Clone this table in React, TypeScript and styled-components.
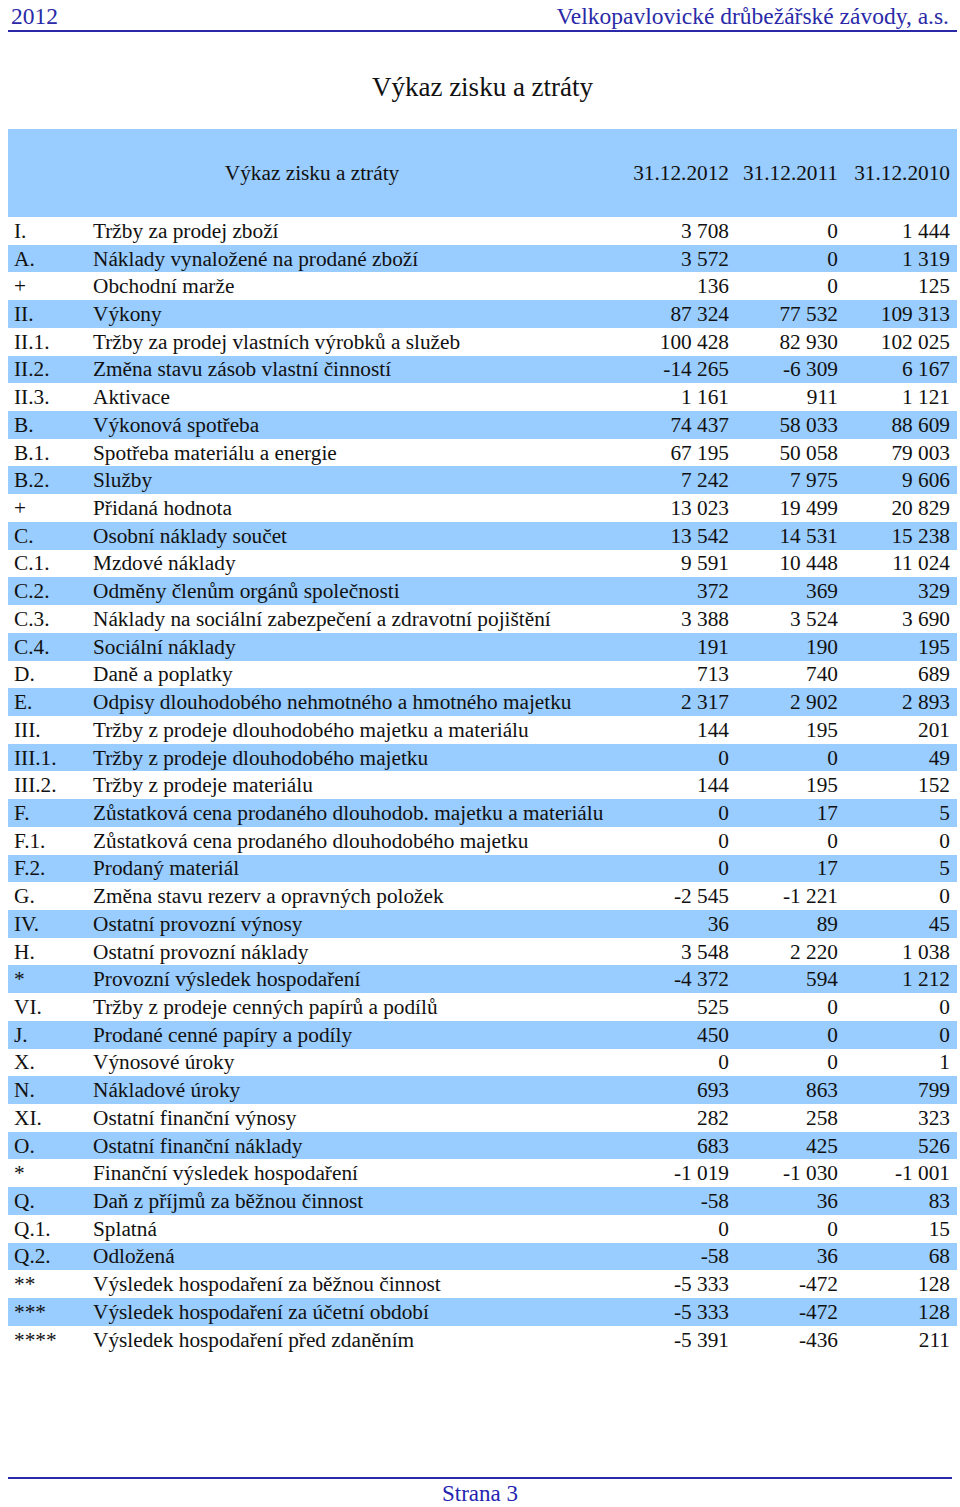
import styled, { createGlobalStyle } from 'styled-components';

const GlobalStyle = createGlobalStyle`
  html, body {
    margin: 0;
    padding: 0;
    background: #ffffff;
  }
  body {
    font-family: "Liberation Serif", "Times New Roman", serif;
    color: #111;
  }
`;

const Page = styled.div`
  width: 960px;
  min-height: 1507px;
  box-sizing: border-box;
  padding: 0 3px 0 8px;
  display: flex;
  flex-direction: column;
`;

const TopBar = styled.header`
  display: flex;
  justify-content: space-between;
  align-items: flex-end;
  height: 30px;
  padding: 0 8px 0 3px;
  border-bottom: 2px solid #2a2aa8;
  color: #2a2aa8;
  font-size: 23.5px;
  line-height: 28px;
`;

const Title = styled.h1`
  margin: 40px 0 0;
  height: 57px;
  text-align: center;
  font-weight: normal;
  font-size: 27px;
  line-height: 30px;
  color: #111;
`;

const Table = styled.table`
  width: 949px;
  border-collapse: collapse;
  table-layout: fixed;
  font-size: 21.3px;
`;

const HeadRow = styled.tr`
  height: 88px;
  background: #99ccff;
`;

const HeadCell = styled.th<{ $align?: 'center' | 'right' }>`
  font-weight: normal;
  text-align: ${(p) => p.$align ?? 'right'};
  padding: 0 7px 0 0;
  vertical-align: middle;
`;

const Row = styled.tr<{ $shaded: boolean }>`
  height: 27.72px;
  background: ${(p) => (p.$shaded ? '#99ccff' : 'transparent')};
`;

const CodeCell = styled.td`
  padding: 1px 0 0 6px;
  white-space: nowrap;
`;

const LabelCell = styled.td`
  padding: 1px 0 0;
  white-space: nowrap;
`;

const NumCell = styled.td`
  padding: 1px 7px 0 0;
  text-align: right;
  white-space: nowrap;
`;

const Spacer = styled.div`
  flex: 1;
`;

const Footer = styled.footer`
  border-top: 2px solid #2a2aa8;
  margin: 0 5px 0 0;
  padding: 2px 0 0;
  height: 26px;
  text-align: center;
  color: #2424b0;
  font-size: 23px;
  line-height: 26px;
`;

type Line = [string, string, string, string, string];

const rows: Line[] = [
  ['I.', 'Tržby za prodej zboží', '3 708', '0', '1 444'],
  ['A.', 'Náklady vynaložené na prodané zboží', '3 572', '0', '1 319'],
  ['+', 'Obchodní marže', '136', '0', '125'],
  ['II.', 'Výkony', '87 324', '77 532', '109 313'],
  ['II.1.', 'Tržby za prodej vlastních výrobků a služeb', '100 428', '82 930', '102 025'],
  ['II.2.', 'Změna stavu zásob vlastní činností', '-14 265', '-6 309', '6 167'],
  ['II.3.', 'Aktivace', '1 161', '911', '1 121'],
  ['B.', 'Výkonová spotřeba', '74 437', '58 033', '88 609'],
  ['B.1.', 'Spotřeba materiálu a energie', '67 195', '50 058', '79 003'],
  ['B.2.', 'Služby', '7 242', '7 975', '9 606'],
  ['+', 'Přidaná hodnota', '13 023', '19 499', '20 829'],
  ['C.', 'Osobní náklady součet', '13 542', '14 531', '15 238'],
  ['C.1.', 'Mzdové náklady', '9 591', '10 448', '11 024'],
  ['C.2.', 'Odměny členům orgánů společnosti', '372', '369', '329'],
  ['C.3.', 'Náklady na sociální zabezpečení a zdravotní pojištění', '3 388', '3 524', '3 690'],
  ['C.4.', 'Sociální náklady', '191', '190', '195'],
  ['D.', 'Daně a poplatky', '713', '740', '689'],
  ['E.', 'Odpisy dlouhodobého nehmotného a hmotného majetku', '2 317', '2 902', '2 893'],
  ['III.', 'Tržby z prodeje dlouhodobého majetku a materiálu', '144', '195', '201'],
  ['III.1.', 'Tržby z prodeje dlouhodobého majetku', '0', '0', '49'],
  ['III.2.', 'Tržby z prodeje materiálu', '144', '195', '152'],
  ['F.', 'Zůstatková cena prodaného dlouhodob. majetku a materiálu', '0', '17', '5'],
  ['F.1.', 'Zůstatková cena prodaného dlouhodobého majetku', '0', '0', '0'],
  ['F.2.', 'Prodaný materiál', '0', '17', '5'],
  ['G.', 'Změna stavu rezerv a opravných položek', '-2 545', '-1 221', '0'],
  ['IV.', 'Ostatní provozní výnosy', '36', '89', '45'],
  ['H.', 'Ostatní provozní náklady', '3 548', '2 220', '1 038'],
  ['*', 'Provozní výsledek hospodaření', '-4 372', '594', '1 212'],
  ['VI.', 'Tržby z prodeje cenných papírů a podílů', '525', '0', '0'],
  ['J.', 'Prodané cenné papíry a podíly', '450', '0', '0'],
  ['X.', 'Výnosové úroky', '0', '0', '1'],
  ['N.', 'Nákladové úroky', '693', '863', '799'],
  ['XI.', 'Ostatní finanční výnosy', '282', '258', '323'],
  ['O.', 'Ostatní finanční náklady', '683', '425', '526'],
  ['*', 'Finanční výsledek hospodaření', '-1 019', '-1 030', '-1 001'],
  ['Q.', 'Daň z příjmů za běžnou činnost', '-58', '36', '83'],
  ['Q.1.', 'Splatná', '0', '0', '15'],
  ['Q.2.', 'Odložená', '-58', '36', '68'],
  ['**', 'Výsledek hospodaření za běžnou činnost', '-5 333', '-472', '128'],
  ['***', 'Výsledek hospodaření za účetní období', '-5 333', '-472', '128'],
  ['****', 'Výsledek hospodaření před zdaněním', '-5 391', '-436', '211'],
];

export default function App() {
  return (
    <>
      <GlobalStyle />
      <Page>
        <TopBar>
          <span>2012</span>
          <span>Velkopavlovické drůbežářské závody, a.s.</span>
        </TopBar>
        <Title>Výkaz zisku a ztráty</Title>
        <Table>
          <colgroup>
            <col style={{ width: 85 }} />
            <col style={{ width: 530 }} />
            <col style={{ width: 113 }} />
            <col style={{ width: 109 }} />
            <col style={{ width: 112 }} />
          </colgroup>
          <thead>
            <HeadRow>
              <HeadCell colSpan={2} $align="center">
                Výkaz zisku a ztráty
              </HeadCell>
              <HeadCell>31.12.2012</HeadCell>
              <HeadCell>31.12.2011</HeadCell>
              <HeadCell>31.12.2010</HeadCell>
            </HeadRow>
          </thead>
          <tbody>
            {rows.map(([code, label, a, b, c], i) => (
              <Row key={i} $shaded={i % 2 === 1}>
                <CodeCell>{code}</CodeCell>
                <LabelCell>{label}</LabelCell>
                <NumCell>{a}</NumCell>
                <NumCell>{b}</NumCell>
                <NumCell>{c}</NumCell>
              </Row>
            ))}
          </tbody>
        </Table>
        <Spacer />
        <Footer>Strana 3</Footer>
      </Page>
    </>
  );
}
